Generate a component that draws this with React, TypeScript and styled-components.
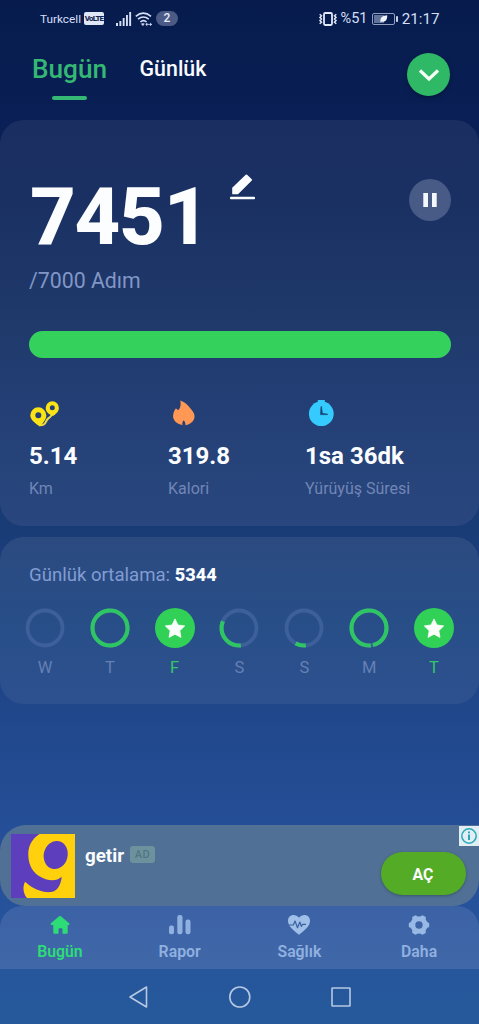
import React from 'react';
import styled, { createGlobalStyle } from 'styled-components';

const GlobalStyle = createGlobalStyle`
  *, *::before, *::after { box-sizing: border-box; }
  html, body { margin: 0; padding: 0; }
  body { background: #26589a; font-family: Roboto, "Noto Sans", sans-serif; }
  svg { display: block; flex: none; overflow: visible; }
`;

const Screen = styled.div`
  width: 479px;
  height: 1024px;
  display: flex;
  flex-direction: column;
  overflow: hidden;
  background: linear-gradient(180deg, #071c4d 0, #091f55 120px, #193c77 530px, #22498e 740px, #25509a 860px, #26599c 1024px);
`;

const StatusBar = styled.div`
  height: 37px;
  padding: 0 40px;
  display: flex;
  align-items: center;
  justify-content: space-between;
  color: #d5dff5;
`;

const StatusGroup = styled.div`
  display: flex;
  align-items: center;
`;

const Carrier = styled.span`
  font-size: 11.8px;
  line-height: 16px;
  width: 42px;
  margin-right: 2px;
`;

const Volte = styled.span`
  display: flex;
  justify-content: center;
  width: 20px;
  height: 13px;
  margin-right: 12px;
  border-radius: 2px;
  background: #dfe7f6;
  color: #14254f;
  font-size: 8px;
  font-weight: 800;
  line-height: 13px;
  letter-spacing: -0.8px;
`;

const CountPill = styled.span`
  width: 22px;
  height: 15px;
  margin-left: 4px;
  border-radius: 8px;
  background: #4b5b86;
  color: #e4eaf8;
  font-size: 12px;
  font-weight: 500;
  line-height: 15px;
  text-align: center;
`;

const StatusText = styled.span<{ $size: number; $width: number }>`
  font-size: ${(p) => p.$size}px;
  width: ${(p) => p.$width}px;
  line-height: 18px;
  white-space: nowrap;
`;

const Header = styled.header`
  height: 83px;
  padding: 0 29px 0 32px;
  display: flex;
  align-items: flex-start;
`;

const Tab = styled.div<{ $active?: boolean }>`
  display: flex;
  flex-direction: column;
  align-items: center;
  width: ${(p) => (p.$active ? 75 : 70)}px;
  margin-right: ${(p) => (p.$active ? 31 : 0)}px;
  padding-top: 16px;
  color: ${(p) => (p.$active ? '#35b873' : '#f8fbff')};
  font-size: ${(p) => (p.$active ? 26.2 : 21.4)}px;
  font-weight: 500;
  line-height: 32px;
  white-space: nowrap;
`;

const TabMarker = styled.span`
  width: 35px;
  height: 4px;
  margin-top: 11px;
  border-radius: 2px;
  background: #35b873;
`;

const RoundButton = styled.button<{ $size: number; $color: string; $raised?: boolean }>`
  width: ${(p) => p.$size}px;
  height: ${(p) => p.$size}px;
  margin: 0 0 0 auto;
  padding: 0;
  border: 0;
  border-radius: 50%;
  display: flex;
  align-items: center;
  justify-content: center;
  background: ${(p) => p.$color};
  box-shadow: ${(p) => (p.$raised ? '0 2px 4px rgba(0, 10, 30, 0.4)' : 'none')};
`;

const HeaderAction = styled.div`
  margin: 16px 0 0 auto;
`;

const Card = styled.section<{ $height: number; $fill: string }>`
  height: ${(p) => p.$height}px;
  flex: none;
  border-radius: 24px;
  background: ${(p) => p.$fill};
`;

const StepsCard = styled(Card)`
  padding: 52px 28px 0 29px;
  margin-bottom: 11px;
`;

const StepsRow = styled.div`
  display: flex;
  height: 88px;
`;

const StepCount = styled.div`
  width: 201px;
  padding-left: 1px;
  color: #fbfdff;
  font-size: 79.5px;
  font-weight: 800;
  line-height: 89px;
  letter-spacing: -1.3px;
`;

const PencilSlot = styled.div`
  padding-top: 2px;
`;

const PauseSlot = styled.div`
  margin: 7px 0 0 auto;
`;

const Goal = styled.div`
  margin-top: 8px;
  color: #8296c5;
  font-size: 21.3px;
  line-height: 26px;
`;

const Progress = styled.div`
  height: 27px;
  margin-top: 37px;
  border-radius: 14px;
  background: #34d15c;
`;

const Stats = styled.div`
  display: grid;
  grid-template-columns: 139px 137px 1fr;
  margin-top: 41px;
`;

const Stat = styled.div`
  display: flex;
  flex-direction: column;
`;

const StatValue = styled.div`
  margin-top: 16px;
  color: #fbfdff;
  font-size: 24px;
  font-weight: 700;
  line-height: 28px;
  white-space: nowrap;
`;

const StatLabel = styled.div`
  margin-top: 9px;
  color: #7186b6;
  font-size: 16px;
  line-height: 20px;
  white-space: nowrap;
`;

const WeekCard = styled(Card)`
  padding: 27px 24px 0;
`;

const Average = styled.div`
  padding-left: 5px;
  color: #829dd2;
  font-size: 18.6px;
  line-height: 22px;
  b { color: #fbfdff; font-size: 18.2px; font-weight: 800; }
`;

const Week = styled.div`
  display: flex;
  justify-content: space-between;
  margin-top: 22px;
`;

const Day = styled.div<{ $done: boolean }>`
  width: 42px;
  display: flex;
  flex-direction: column;
  align-items: center;
  color: ${(p) => (p.$done ? '#34c769' : '#6580b5')};
  font-size: 16.5px;
  line-height: 20px;
  svg { margin-bottom: 10px; }
`;

const AdBanner = styled.aside`
  height: 81px;
  flex: none;
  margin-top: auto;
  padding-left: 11px;
  display: flex;
  align-items: flex-start;
  border-radius: 26px 0 26px 26px;
  background: #517095;
`;

const AdLogo = styled.div`
  margin-top: 9px;
`;

const AdTitle = styled.div`
  margin: 19px 6px 0 10px;
  width: 39px;
  color: #fbfdff;
  font-size: 18.8px;
  font-weight: 700;
  line-height: 24px;
`;

const AdTag = styled.span`
  margin-top: 21px;
  width: 25px;
  height: 17px;
  border-radius: 3px;
  background: #6d929d;
  color: #517681;
  font-size: 11px;
  font-weight: 500;
  line-height: 17px;
  letter-spacing: 0.5px;
  text-align: center;
`;

const OpenButton = styled.button`
  width: 85px;
  height: 43px;
  margin: 27px -6.5px 0 auto;
  padding: 2px 0 0;
  border: 0;
  border-radius: 22px;
  background: #54ab26;
  box-shadow: 0 1px 3px rgba(20, 50, 50, 0.4);
  color: #fbfdff;
  font-family: inherit;
  font-size: 15.8px;
  font-weight: 700;
`;

const AdInfo = styled.div`
  width: 20px;
  height: 20px;
  margin-top: 1px;
  padding: 1px;
  background: #e2edf4;
`;

const Nav = styled.nav`
  height: 63px;
  flex: none;
  display: grid;
  grid-template-columns: repeat(4, 1fr);
  border-radius: 22px 22px 0 0;
  background: linear-gradient(180deg, #3c62a6, #4068a8);
`;

const NavItem = styled.div<{ $active?: boolean }>`
  display: flex;
  flex-direction: column;
  align-items: center;
  padding-top: 8px;
  color: ${(p) => (p.$active ? '#2edc77' : '#90b1e0')};
  font-size: 15.8px;
  font-weight: 600;
  line-height: 20px;
  svg { margin-bottom: 6px; }
`;

const SystemBar = styled.footer`
  height: 55px;
  flex: none;
  display: flex;
  align-items: center;
  justify-content: center;
  gap: 80px;
`;

type DayData = { label: string; progress: number };

const days: DayData[] = [
  { label: 'W', progress: 0 },
  { label: 'T', progress: 1 },
  { label: 'F', progress: 2 },
  { label: 'S', progress: 0.33 },
  { label: 'S', progress: 0.097 },
  { label: 'M', progress: 0.98 },
  { label: 'T', progress: 2 },
];

const DayRing = ({ progress }: { progress: number }) => {
  if (progress > 1) {
    return (
      <svg width="40" height="40" viewBox="0 0 40 40">
        <circle cx="20" cy="20" r="20" fill="#31d057" />
        <path d="M20 10.900l2.900 6.100 6.800.9-4.900 4.800 1.200 6.700-6-3.200-6 3.200 1.200-6.700-4.900-4.800 6.800-.9z" fill="#fbfffb" stroke="#fbfffb" strokeWidth=".8" strokeLinejoin="round" />
      </svg>
    );
  }
  return (
    <svg width="40" height="40" viewBox="0 0 40 40" fill="none" strokeWidth="3.8">
      <circle cx="20" cy="20" r="17.5" stroke="#3d609b" />
      {progress > 0 && (
        <circle
          cx="20" cy="20" r="17.5" stroke="#30c564" strokeWidth="4.2" pathLength="100"
          strokeDasharray={`${progress * 100} 100`}
          transform="rotate(84 20 20)"
        />
      )}
    </svg>
  );
};

const SignalIcon = () => (
  <svg width="16" height="14" viewBox="0 0 16 14" fill="#d5dff5">
    <path d="M0 11h2v3H0zM3.4 9h1.9v5H3.4zM6.7 6h1.9v8H6.7zM10 3h1.9v11H10zM13.2 0h1.9v14h-1.9z" />
  </svg>
);

const WifiIcon = () => (
  <svg width="20" height="14" viewBox="-3 0 20 14" fill="none" stroke="#d5dff5" strokeWidth="1.6">
    <path d="M.8 4.3Q8.3-2.2 16 4.3M3 7.2q5.3-4.4 10.8 0M5.4 10q3-2.6 6.2 0" />
    <path d="M6.500 11.800h2.700l-1.300 1.800zM11 12.4h5.6M12.2 11l-1.4 1.4 1.4 1.3M15.2 11l1.4 1.4-1.4 1.3" fill="#d5dff5" strokeWidth=".8" />
  </svg>
);

const VibrateIcon = () => (
  <svg width="18" height="14" viewBox="0 0 18 14" fill="none" stroke="#e2e9f8">
    <rect x="5" y="1" width="8" height="12" rx="1.2" strokeWidth="1.8" />
    <path d="M.7 2.2l1.8 1.6L1 5.4 2.5 7 1 8.6l1.5 1.6L.7 11.8M17.3 2.2l-1.8 1.6L17 5.4 15.5 7 17 8.6l-1.5 1.6 1.8 1.6" strokeWidth="1.5" />
  </svg>
);

const BatteryIcon = () => (
  <svg width="26" height="12" viewBox="0 0 26 12">
    <rect x=".5" y=".5" width="22" height="11" rx="1.5" fill="none" stroke="#909dbe" />
    <rect x="2" y="2" width="10" height="8" fill="#62739b" />
    <path d="M8.5 9.2C7.8 4 11 2.5 15.2 2.2c.3 4.8-2.2 7.3-5.4 6.2L8.5 9.5z" fill="#f0f4fc" />
    <rect x="24" y="3" width="2" height="6" rx=".7" fill="#c4cee5" />
  </svg>
);

const PencilIcon = () => (
  <svg width="26" height="26" viewBox="0 0 26 26" fill="#fbfdff">
    <path d="M2.200 20.300v-6.500L15.700.7q.7-.6 1.400 0l4.700 4.500q.6.600 0 1.200L8 20.300z" />
    <rect x="0" y="22.800" width="25" height="2.400" rx=".8" />
  </svg>
);

const RouteIcon = () => (
  <svg width="30" height="27" viewBox="0 0 30 27">
    <path d="M10 26.300c8 .7 6.100-5.400 9.800-7.300 1.500-.8 2.300-1.800 3-3.400" fill="none" stroke="#ead94a" strokeWidth="2" />
    <path fillRule="evenodd" fill="#fbe316" d="M9.300 8.300a8 8 0 0 1 8 8c0 3.900-2.700 6.600-4.800 10q-2.200 1.500-4.600-.7C5 23 1.300 20.300 1.300 16.300a8 8 0 0 1 8-8zm0 5a3 3 0 1 0 0 6 3 3 0 0 0 0-6z" />
    <path fillRule="evenodd" fill="#fbe316" d="M23.300 2.200a6.700 6.700 0 0 1 6.600 6.700c0 3.800-3.200 6-5.800 8.100-3.600-1.400-7.400-3.800-7.400-8.100a6.700 6.700 0 0 1 6.600-6.700zm0 4.100a2.500 2.500 0 1 0 0 5 2.500 2.500 0 0 0 0-5z" />
  </svg>
);

const FlameIcon = () => (
  <svg width="30" height="27" viewBox="0 0 30 27">
    <path d="M12.300 1.500C18.700 3.600 21 8 24.700 12.200c4.400 6.100.6 12.500-7.200 14 .1-2.200-.7-3.800-1.700-5-1.300 1.300-1.800 2.900-1.300 4.800C8.400 24.800 4.900 21 5.100 16.900c.1-3.300 1.300-5.600 2.900-7.700.7 1 1.500 1.500 2.600 1.800 2-2.500 2.500-5.800 1.700-9.500z" fill="#ff9854" />
  </svg>
);

const ClockIcon = () => (
  <svg width="30" height="27" viewBox="0 0 30 27">
    <path d="M12.800 1h7v3h-7z" fill="#35cbf8" />
    <circle cx="16.300" cy="14.700" r="12.400" fill="#35cbff" />
    <path d="M15.900 7.500h.7l.9 6.800 5 .6v.8h-7.200z" fill="#174575" stroke="#174575" strokeWidth=".4" />
  </svg>
);

const HomeIcon = () => (
  <svg width="22" height="22" viewBox="0 0 22 22" fill="#2edc77">
    <path d="M10.1 2.300q.9-.7 1.800 0l8.500 7.300q.7 1-.5 1.300h-1.200v7.600q0 1.200-1.200 1.200h-4V15.500q0-1.200-1.200-1.200h-1.600q-1.200 0-1.200 1.200v4.200h-4q-1.200 0-1.200-1.200v-7.600H2.500Q1 10.500 1.700 9.600z" />
  </svg>
);

const ReportIcon = () => (
  <svg width="22" height="22" viewBox="0 0 22 22" fill="#90b1e0">
    <rect x="0" y="11.500" width="5" height="8.800" rx="2" />
    <rect x="8.300" y="1" width="5.200" height="19.300" rx="2.200" />
    <rect x="16.500" y="5.600" width="5" height="14.700" rx="2.200" />
  </svg>
);

const HeartIcon = () => (
  <svg width="22" height="22" viewBox="0 0 22 22">
    <path d="M11 20.700C4.800 16.100 0 12 0 6.800 0 .9 7-1 11 3.700 15-1 22 .9 22 6.800c0 5.200-4.800 9.300-11 13.900z" fill="#9fbee8" />
    <path d="M1 11h4.300l1.800-3.900 2.400 6.600 2.400-5.700 1.500 4.500 1.300-2.200H18" fill="none" stroke="#39619f" strokeWidth="1.200" strokeLinejoin="round" />
  </svg>
);

const GearIcon = () => (
  <svg width="22" height="22" viewBox="0 0 22 22" fill="none" stroke="#98b9e5">
    <circle cx="11" cy="11" r="6.200" strokeWidth="5" />
    {[0, 60, 120, 180, 240, 300].map((angle) => (
      <path key={angle} d="M17.500 9.200l2.500.4v2.800l-2.500.4z" strokeWidth="2.400" strokeLinejoin="round" transform={`rotate(${angle} 11 11)`} />
    ))}
  </svg>
);

const BrandLogo = () => (
  <svg width="64" height="64" viewBox="0 0 64 64">
    <rect width="64" height="64" fill="#5d3ebd" />
    <path d="M28.500 0H64v64H16C12 59 11.500 53 14 47.700 22 55 32 59 40 58c7-1 10-8 10.700-15.300C45 48 36 47 28 42c-8-5-11-14-10.700-23C17.500 11 22 4 28.500 0z" fill="#ffd10d" />
    <ellipse cx="44.700" cy="21" rx="11.900" ry="14.200" transform="rotate(14 44.700 21)" fill="#5d3ebd" />
  </svg>
);

export default function App() {
  return (
    <>
      <GlobalStyle />
      <Screen>
        <StatusBar>
          <StatusGroup>
            <Carrier>Turkcell</Carrier>
            <Volte>VoLTE</Volte>
            <SignalIcon />
            <WifiIcon />
            <CountPill>2</CountPill>
          </StatusGroup>
          <StatusGroup>
            <VibrateIcon />
            <StatusText $size={14.5} $width={35}>&nbsp;%51</StatusText>
            <BatteryIcon />
            <StatusText $size={15.2} $width={41}>&nbsp;21:17</StatusText>
          </StatusGroup>
        </StatusBar>

        <Header>
          <Tab $active>
            Bugün
            <TabMarker />
          </Tab>
          <Tab>Günlük</Tab>
          <HeaderAction>
            <RoundButton $size={43} $color="#2fb865" $raised aria-label="Menü">
              <svg width="20" height="12" viewBox="0 0 20 12" fill="none" stroke="#f4fff6" strokeWidth="3.200">
                <path d="M1 1.500l9 8.500 9-8.500" />
              </svg>
            </RoundButton>
          </HeaderAction>
        </Header>

        <StepsCard $height={406} $fill="linear-gradient(180deg, #1b2e62 0, #1a3063 80px, #203a6c 210px, #233f76 290px, #29477e 100%)">
          <StepsRow>
            <StepCount>7451</StepCount>
            <PencilSlot><PencilIcon /></PencilSlot>
            <PauseSlot>
              <RoundButton $size={42} $color="#485b86" aria-label="Duraklat">
                <svg width="14" height="14" viewBox="0 0 14 14" fill="#f5f8ff">
                  <path d="M.3 0h4.700v14H.3zM9 0h4.700v14H9z" />
                </svg>
              </RoundButton>
            </PauseSlot>
          </StepsRow>
          <Goal>/7000 Adım</Goal>
          <Progress />
          <Stats>
            <Stat>
              <RouteIcon />
              <StatValue>5.14</StatValue>
              <StatLabel>Km</StatLabel>
            </Stat>
            <Stat>
              <FlameIcon />
              <StatValue>319.8</StatValue>
              <StatLabel>Kalori</StatLabel>
            </Stat>
            <Stat>
              <ClockIcon />
              <StatValue>1sa 36dk</StatValue>
              <StatLabel>Yürüyüş Süresi</StatLabel>
            </Stat>
          </Stats>
        </StepsCard>

        <WeekCard $height={167} $fill="linear-gradient(180deg, #2b4a80, #284e88 50%, #2d518f)">
          <Average>Günlük ortalama: <b>5344</b></Average>
          <Week>
            {days.map((day, i) => (
              <Day key={i} $done={day.progress > 1}>
                <DayRing progress={day.progress} />
                {day.label}
              </Day>
            ))}
          </Week>
        </WeekCard>

        <AdBanner>
          <AdLogo><BrandLogo /></AdLogo>
          <AdTitle>getir</AdTitle>
          <AdTag>AD</AdTag>
          <OpenButton>AÇ</OpenButton>
          <AdInfo>
            <svg width="18" height="18" viewBox="0 0 18 18" fill="none" stroke="#27a9b9">
              <circle cx="9" cy="9" r="7.200" strokeWidth="1.500" />
              <path d="M9 7.500V13M9 4.500v1.800" strokeWidth="2" />
            </svg>
          </AdInfo>
        </AdBanner>

        <Nav>
          <NavItem $active><HomeIcon />Bugün</NavItem>
          <NavItem><ReportIcon />Rapor</NavItem>
          <NavItem><HeartIcon />Sağlık</NavItem>
          <NavItem><GearIcon />Daha</NavItem>
        </Nav>

        <SystemBar>
          <svg width="20" height="22" viewBox="0 0 20 22" fill="none" stroke="#b7c8e2" strokeWidth="1.600" strokeLinejoin="round">
            <path d="M17.500 1v20L1 11z" />
          </svg>
          <svg width="22" height="22" viewBox="0 0 22 22" fill="none" stroke="#b7c8e2" strokeWidth="1.600">
            <circle cx="10.800" cy="11" r="10" />
          </svg>
          <svg width="20" height="20" viewBox="0 0 20 20" fill="none" stroke="#b7c8e2" strokeWidth="1.600">
            <rect x="1" y="1" width="18" height="18" rx=".5" />
          </svg>
        </SystemBar>
      </Screen>
    </>
  );
}
